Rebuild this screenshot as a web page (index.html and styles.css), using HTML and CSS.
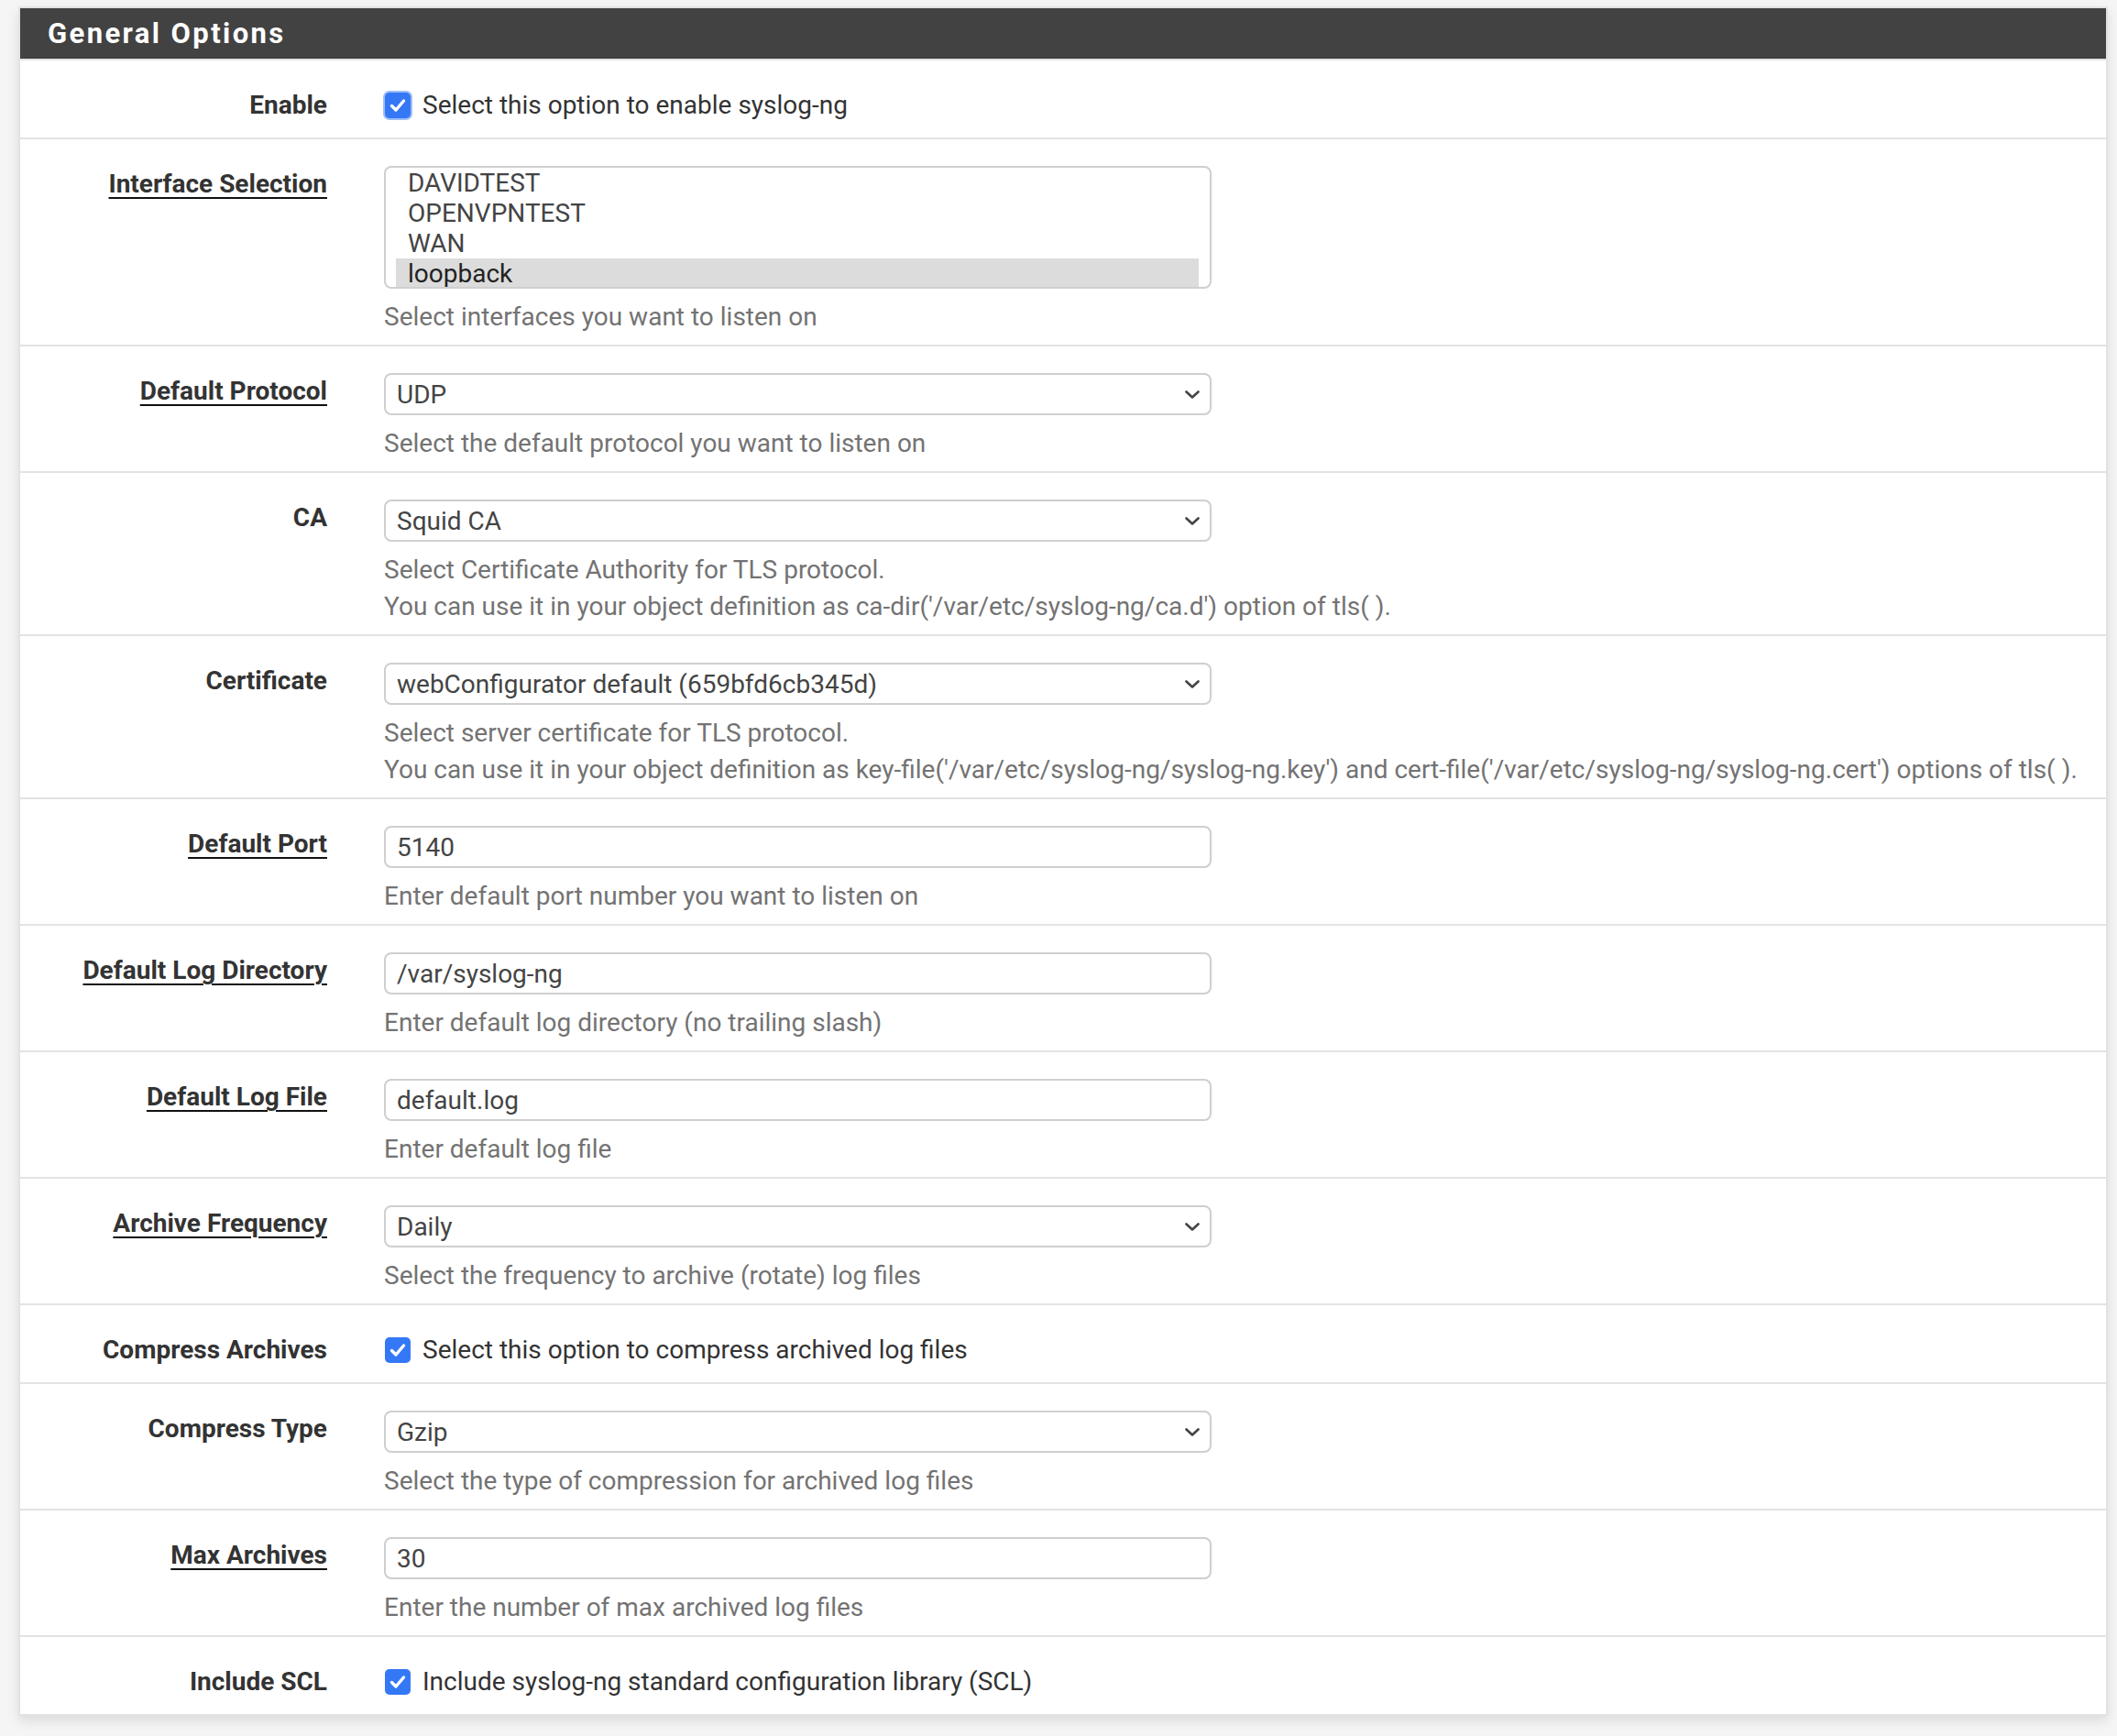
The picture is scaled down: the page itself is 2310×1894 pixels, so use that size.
FILE: index.html
```html
<!DOCTYPE html>
<html>
<head>
<meta charset="utf-8">
<link rel="stylesheet" href="styles.css">
</head>
<body>
<div class="page">
  <section class="panel">
    <h2 class="panel-title">General Options</h2>

    <div class="row row-check">
      <div class="label">Enable</div>
      <div class="ctrl">
        <div class="check"><span class="box focus"><svg viewBox="0 0 28 28"><polyline points="7.5,14.5 12,19 20.5,9" /></svg></span><span>Select this option to enable syslog-ng</span></div>
      </div>
    </div>

    <div class="row">
      <div class="label"><span class="u">Interface Selection</span></div>
      <div class="ctrl">
        <div class="listbox">
          <div class="opt">DAVIDTEST</div>
          <div class="opt">OPENVPNTEST</div>
          <div class="opt">WAN</div>
          <div class="opt sel">loopback</div>
        </div>
        <div class="help">Select interfaces you want to listen on</div>
      </div>
    </div>

    <div class="row">
      <div class="label"><span class="u">Default Protocol</span></div>
      <div class="ctrl">
        <div class="field select"><span>UDP</span><svg class="chev" viewBox="0 0 16 9"><polyline points="1.5,1.5 8,7.5 14.5,1.5" /></svg></div>
        <div class="help">Select the default protocol you want to listen on</div>
      </div>
    </div>

    <div class="row">
      <div class="label">CA</div>
      <div class="ctrl">
        <div class="field select"><span>Squid CA</span><svg class="chev" viewBox="0 0 16 9"><polyline points="1.5,1.5 8,7.5 14.5,1.5" /></svg></div>
        <div class="help">Select Certificate Authority for TLS protocol.<br>You can use it in your object definition as ca-dir('/var/etc/syslog-ng/ca.d') option of tls( ).</div>
      </div>
    </div>

    <div class="row">
      <div class="label">Certificate</div>
      <div class="ctrl">
        <div class="field select"><span>webConfigurator default (659bfd6cb345d)</span><svg class="chev" viewBox="0 0 16 9"><polyline points="1.5,1.5 8,7.5 14.5,1.5" /></svg></div>
        <div class="help">Select server certificate for TLS protocol.<br>You can use it in your object definition as key-file('/var/etc/syslog-ng/syslog-ng.key') and cert-file('/var/etc/syslog-ng/syslog-ng.cert') options of tls( ).</div>
      </div>
    </div>

    <div class="row">
      <div class="label"><span class="u">Default Port</span></div>
      <div class="ctrl">
        <div class="field"><span>5140</span></div>
        <div class="help">Enter default port number you want to listen on</div>
      </div>
    </div>

    <div class="row">
      <div class="label"><span class="u">Default Log Directory</span></div>
      <div class="ctrl">
        <div class="field"><span>/var/syslog-ng</span></div>
        <div class="help">Enter default log directory (no trailing slash)</div>
      </div>
    </div>

    <div class="row">
      <div class="label"><span class="u">Default Log File</span></div>
      <div class="ctrl">
        <div class="field"><span>default.log</span></div>
        <div class="help">Enter default log file</div>
      </div>
    </div>

    <div class="row">
      <div class="label"><span class="u">Archive Frequency</span></div>
      <div class="ctrl">
        <div class="field select"><span>Daily</span><svg class="chev" viewBox="0 0 16 9"><polyline points="1.5,1.5 8,7.5 14.5,1.5" /></svg></div>
        <div class="help">Select the frequency to archive (rotate) log files</div>
      </div>
    </div>

    <div class="row row-check">
      <div class="label">Compress Archives</div>
      <div class="ctrl">
        <div class="check"><span class="box"><svg viewBox="0 0 28 28"><polyline points="7.5,14.5 12,19 20.5,9" /></svg></span><span>Select this option to compress archived log files</span></div>
      </div>
    </div>

    <div class="row">
      <div class="label">Compress Type</div>
      <div class="ctrl">
        <div class="field select"><span>Gzip</span><svg class="chev" viewBox="0 0 16 9"><polyline points="1.5,1.5 8,7.5 14.5,1.5" /></svg></div>
        <div class="help">Select the type of compression for archived log files</div>
      </div>
    </div>

    <div class="row">
      <div class="label"><span class="u">Max Archives</span></div>
      <div class="ctrl">
        <div class="field"><span>30</span></div>
        <div class="help">Enter the number of max archived log files</div>
      </div>
    </div>

    <div class="row row-check">
      <div class="label">Include SCL</div>
      <div class="ctrl">
        <div class="check"><span class="box"><svg viewBox="0 0 28 28"><polyline points="7.5,14.5 12,19 20.5,9" /></svg></span><span>Include syslog-ng standard configuration library (SCL)</span></div>
      </div>
    </div>
  </section>
</div>
</body>
</html>
```

FILE: styles.css
```css
html, body {
  margin: 0;
  padding: 0;
  background: #f5f5f5;
}

body {
  font-family: Roboto, "Liberation Sans", sans-serif;
  font-size: 28px;
  color: #333;
}

.page {
  padding: 7px 10px 40px 20px;
}

.panel {
  background: #fff;
  border: 2px solid #e2e2e2;
  box-shadow: 0 6px 12px rgba(0, 0, 0, 0.10);
}

.panel-title {
  margin: 0;
  height: 55px;
  line-height: 55px;
  padding-left: 30px;
  background: #424242;
  color: #fff;
  font-size: 31px;
  font-weight: 700;
  letter-spacing: 2.4px;
}

.row {
  display: grid;
  grid-template-columns: 335px 1fr;
  column-gap: 62px;
  padding: 29px 0 10px;
  border-top: 2px solid #e3e3e3;
}

.row-check {
  padding-bottom: 15px;
}

.label {
  text-align: right;
  font-weight: 700;
  line-height: 40px;
  color: #333;
}

.u {
  text-decoration: underline;
  text-decoration-thickness: 2px;
  text-underline-offset: 5px;
  text-decoration-color: #111;
}

.ctrl {
  min-width: 0;
}

.field {
  box-sizing: border-box;
  width: 903px;
  height: 46px;
  border: 2px solid #cfcfcf;
  border-radius: 8px;
  padding: 0 12px;
  display: flex;
  align-items: center;
  justify-content: space-between;
  color: #444;
  background: #fff;
}

.chev {
  width: 16px;
  height: 9px;
  margin-right: -1px;
  fill: none;
  stroke: #444;
  stroke-width: 2.6;
  stroke-linecap: round;
  stroke-linejoin: round;
}

.listbox {
  box-sizing: border-box;
  width: 903px;
  height: 134px;
  border: 2px solid #cfcfcf;
  border-radius: 8px;
  padding: 0 12px 0 11px;
  overflow: hidden;
  color: #444;
}

.opt {
  height: 33px;
  line-height: 33px;
  padding-left: 13px;
}

.opt.sel {
  background: #dcdcdc;
  color: #222;
}

.help {
  margin-top: 11px;
  line-height: 40px;
  color: #737373;
  white-space: nowrap;
}

.check {
  display: flex;
  align-items: center;
  gap: 13px;
  height: 40px;
  line-height: 40px;
  color: #333;
  padding-left: 1px;
}

.box {
  width: 28px;
  height: 28px;
  border-radius: 5px;
  background: #3478f6;
  display: flex;
  flex: none;
}

.box.focus {
  box-shadow: 0 0 0 2px #9dbdf6;
}

.box svg {
  width: 28px;
  height: 28px;
  fill: none;
  stroke: #fff;
  stroke-width: 3.4;
  stroke-linecap: round;
  stroke-linejoin: round;
}
```
